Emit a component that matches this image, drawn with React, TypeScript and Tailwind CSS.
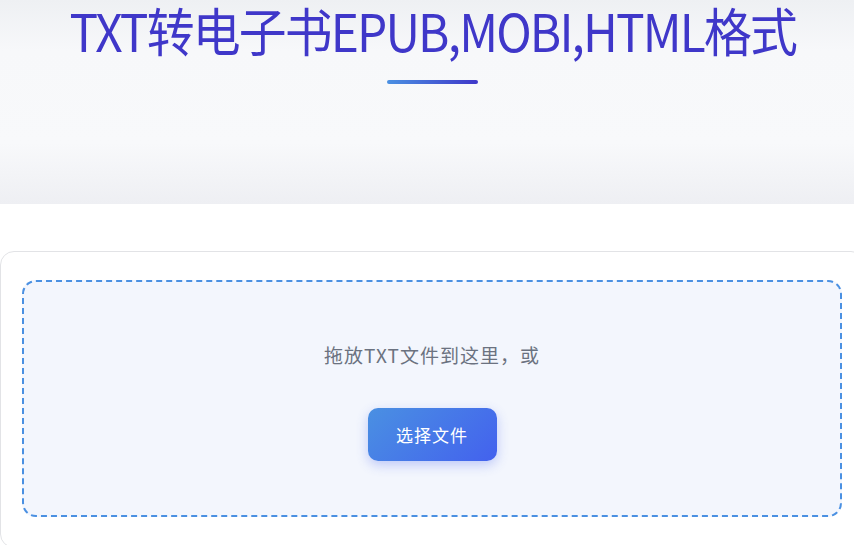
import React from 'react';

const App: React.FC = () => {
  return (
    <div className="w-full min-h-[545px] overflow-hidden bg-white font-['Noto_Sans_CJK_SC','Noto_Sans',sans-serif]">
      {/* 页面内容比视口略宽，右侧被裁掉 */}
      <div className="w-[865px]">
        {/* 顶部标题区 */}
        <header className="h-[204px] bg-[linear-gradient(180deg,#eef0f3_0%,#f7f8fa_25%,#f8f9fb_70%,#eeeff3_100%)] flex flex-col items-center">
          <h1 className="text-[52px] leading-[60px] font-normal text-[#3f37c9] tracking-[-2px] whitespace-nowrap scale-x-[0.92]">
            TXT转电子书EPUB,MOBI,HTML格式
          </h1>
          <div className="mt-[20px] w-[91px] h-[4px] rounded-full bg-[linear-gradient(90deg,#4a90e2,#3f37c9)]" />
        </header>

        {/* 上传卡片 */}
        <main className="pt-[47px]">
          <div className="rounded-[14px] border border-[#e2e3e6] bg-white pl-[21px] pr-[22px] pt-[28px] pb-[30px]">
            <div className="h-[237px] rounded-[14px] border-2 border-dashed border-[#4a90e2] bg-[#f3f6fd] flex flex-col items-center">
              <p className="mt-[60px] text-[19px] leading-[26px] tracking-[1px] text-[#6b7280]">拖放TXT文件到这里，或</p>
              <button className="mt-[40px] w-[129px] h-[53px] rounded-[10px] bg-[linear-gradient(135deg,#4a90e2,#4361ee)] text-white text-[17px] tracking-[1px] shadow-[0_4px_12px_rgba(67,97,238,0.3)]">
                选择文件
              </button>
            </div>
          </div>
        </main>
      </div>
    </div>
  );
};

export default App;
